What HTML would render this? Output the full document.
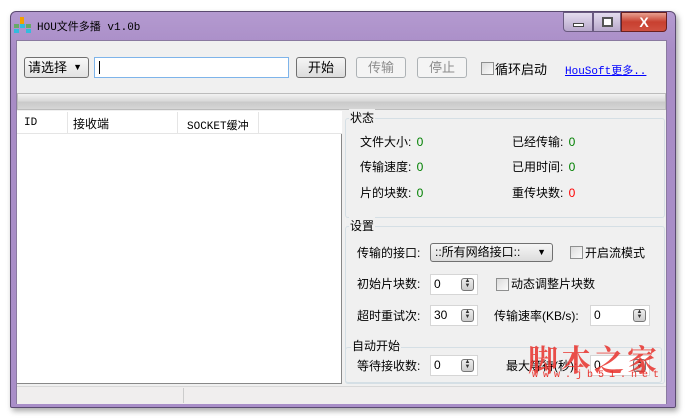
<!DOCTYPE html>
<html><head><meta charset="utf-8"><style>
*{box-sizing:border-box;margin:0;padding:0}
body{width:690px;height:419px;background:#fff;position:relative;overflow:hidden;font-family:"Liberation Sans","Noto Sans CJK SC",sans-serif;font-size:12px;color:#000}
.a{position:absolute}
.win{left:10px;top:11px;width:666px;height:397px;background:linear-gradient(#b49ad0,#a88cc6 40px,#a98ec8);border:1px solid #5a4a70;border-radius:6px 6px 2px 2px;box-shadow:2px 3px 6px rgba(0,0,0,.35)}
.client{left:16px;top:40px;width:651px;height:364px;background:#f0f0f0;border:1px solid #8a7aa0}
.btn{border:1px solid #707070;border-radius:3px;background:linear-gradient(#f6f6f6,#dcdcdc);text-align:center;line-height:19px;font-size:13px}
.dis{border-color:#adb2b5;color:#8c8c8c;background:#f4f4f4}
.chk{width:13px;height:13px;border:1px solid #8e8f8f;background:linear-gradient(135deg,#dcdcdc,#fbfbfb)}
.spin{background:#fff;border:1px solid #d6d6d6;height:21px;padding:2px 3px;font-size:12px}
.sb{position:absolute;right:3px;top:3px;width:13px;height:13px;border:1px solid #777;border-radius:3px;background:linear-gradient(#eee,#ccc);font-size:6px;line-height:5px;text-align:center;color:#333}
.grp{border:1px solid #d5dfe5;border-radius:3px}
.g{color:#008000}
</style></head><body>
<div class="a win"></div>
<div class="a" style="left:14px;top:17px;width:17px;height:16px">
<div class="a" style="left:6px;top:0;width:4px;height:7px;background:#f2a000"></div>
<div class="a" style="left:0;top:7px;width:5px;height:4px;background:#6a6"></div>
<div class="a" style="left:6px;top:7px;width:5px;height:4px;background:#3bd"></div>
<div class="a" style="left:12px;top:7px;width:5px;height:4px;background:#6a6"></div>
<div class="a" style="left:0;top:12px;width:5px;height:4px;background:#3bd"></div>
<div class="a" style="left:12px;top:12px;width:5px;height:4px;background:#3bd"></div>
</div>
<div class="a" style="left:37px;top:18px;font-family:'Liberation Mono','Noto Sans CJK SC',monospace;font-size:11px">HOU文件多播 v1.0b</div>
<div class="a" style="left:563px;top:12px;width:30px;height:20px;border:1px solid #6a5a80;border-radius:0 0 0 4px;background:linear-gradient(#e4dcee,#b8a8cc)"><div class="a" style="left:9px;top:10px;width:11px;height:4px;background:#fff;border:1px solid #444"></div></div>
<div class="a" style="left:593px;top:12px;width:28px;height:20px;border:1px solid #6a5a80;background:linear-gradient(#e4dcee,#b8a8cc)"><div class="a" style="left:8px;top:4px;width:11px;height:10px;border:2px solid #555;background:#fff"></div></div>
<div class="a" style="left:621px;top:12px;width:46px;height:20px;border:1px solid #6a2020;border-radius:0 0 4px 0;background:linear-gradient(#e8a090,#c84030 50%,#d05040);color:#fff;font-weight:bold;text-align:center;line-height:18px;font-size:14px">X</div>
<div class="a client"></div>
<div class="a btn" style="left:24px;top:57px;width:65px;height:21px;text-align:left;padding-left:3px;background:linear-gradient(#f8f8f8,#e2e2e2)">请选择 <span style="position:absolute;right:6px;top:0;font-size:9px">▼</span></div>
<div class="a" style="left:94px;top:57px;width:195px;height:21px;border:1px solid #7eb4ea;background:#fff"><div class="a" style="left:4px;top:3px;width:1px;height:13px;background:#000"></div></div>
<div class="a btn" style="left:296px;top:57px;width:50px;height:21px">开始</div>
<div class="a btn dis" style="left:356px;top:57px;width:50px;height:21px">传输</div>
<div class="a btn dis" style="left:417px;top:57px;width:50px;height:21px">停止</div>
<div class="a chk" style="left:481px;top:62px"></div>
<div class="a" style="left:495px;top:59px;font-size:13px">循环启动</div>
<div class="a" style="left:565px;top:62px;color:#00f;text-decoration:underline;font-family:'Liberation Mono','Noto Sans CJK SC',monospace;font-size:11px">HouSoft更多..</div>
<div class="a" style="left:17px;top:93px;width:649px;height:17px;border:1px solid #bcbcbc;background:linear-gradient(#f2f2f2,#dadada 45%,#c9c9c9 55%,#d6d6d6)"></div>
<div class="a" style="left:17px;top:111px;width:325px;height:273px;background:#fff;border-right:1px solid #888;border-bottom:1px solid #888"></div>
<div class="a" style="left:17px;top:111px;width:325px;height:23px;background:#fff;border-bottom:1px solid #e5e5e5"></div>
<div class="a" style="left:67px;top:112px;width:1px;height:22px;background:#e5e5e5"></div>
<div class="a" style="left:177px;top:112px;width:1px;height:22px;background:#e5e5e5"></div>
<div class="a" style="left:258px;top:112px;width:1px;height:22px;background:#e5e5e5"></div>
<div class="a" style="left:24px;top:117px;font-family:'Liberation Mono','Noto Sans CJK SC',monospace;font-size:11px">ID</div>
<div class="a" style="left:73px;top:115px">接收端</div>
<div class="a" style="left:187px;top:117px;font-family:'Liberation Mono','Noto Sans CJK SC',monospace;font-size:11px">SOCKET缓冲</div>
<div class="a grp" style="left:345px;top:118px;width:320px;height:100px"></div>
<div class="a" style="left:349px;top:109px;background:#f0f0f0;padding:0 1px">状态</div>
<div class="a" style="left:360px;top:133px">文件大小: <span class="g" style="margin-left:2px">0</span></div>
<div class="a" style="left:360px;top:158px">传输速度: <span class="g" style="margin-left:2px">0</span></div>
<div class="a" style="left:360px;top:184px">片的块数: <span class="g" style="margin-left:2px">0</span></div>
<div class="a" style="left:512px;top:133px">已经传输: <span class="g" style="margin-left:2px">0</span></div>
<div class="a" style="left:512px;top:158px">已用时间: <span class="g" style="margin-left:2px">0</span></div>
<div class="a" style="left:512px;top:184px">重传块数: <span style="color:#f00;margin-left:2px">0</span></div>
<div class="a grp" style="left:345px;top:226px;width:320px;height:158px"></div>
<div class="a" style="left:349px;top:217px;background:#f0f0f0;padding:0 1px">设置</div>
<div class="a" style="left:357px;top:244px">传输的接口:</div>
<div class="a btn" style="left:430px;top:243px;width:123px;height:19px;line-height:17px;text-align:left;padding-left:4px;font-size:12px">::所有网络接口:: <span style="position:absolute;right:6px;top:0;font-size:9px">▼</span></div>
<div class="a chk" style="left:570px;top:246px"></div>
<div class="a" style="left:585px;top:244px">开启流模式</div>
<div class="a" style="left:357px;top:275px">初始片块数:</div>
<div class="a spin" style="left:430px;top:274px;width:48px">0<div class="sb">▲<br>▼</div></div>
<div class="a chk" style="left:496px;top:278px"></div>
<div class="a" style="left:511px;top:275px">动态调整片块数</div>
<div class="a" style="left:357px;top:307px">超时重试次:</div>
<div class="a spin" style="left:430px;top:305px;width:48px">30<div class="sb">▲<br>▼</div></div>
<div class="a" style="left:494px;top:307px">传输速率(KB/s):</div>
<div class="a spin" style="left:590px;top:305px;width:60px">0<div class="sb">▲<br>▼</div></div>
<div class="a grp" style="left:345px;top:347px;width:317px;height:36px"></div>
<div class="a" style="left:351px;top:337px;background:#f0f0f0;padding:0 1px">自动开始</div>
<div class="a" style="left:357px;top:357px">等待接收数:</div>
<div class="a spin" style="left:430px;top:355px;width:48px">0<div class="sb">▲<br>▼</div></div>
<div class="a" style="left:506px;top:357px">最大等待(秒):</div>
<div class="a spin" style="left:590px;top:355px;width:60px">0<div class="sb">▲<br>▼</div></div>
<div class="a" style="left:528px;top:336px;color:#e8322c;font-size:30px;letter-spacing:3px;font-family:'Noto Serif CJK SC',serif;font-weight:bold;opacity:.85">脚本之家</div>
<div class="a" style="left:532px;top:370px;color:#e8322c;font-size:10px;letter-spacing:5px;font-family:'Liberation Mono',monospace">www.jb51.net</div>
<div class="a" style="left:17px;top:386px;width:649px;height:18px;background:#f0eeee;border-top:1px solid #d8d8d8"></div>
<div class="a" style="left:183px;top:388px;width:1px;height:15px;background:#ccc"></div>
</body></html>
